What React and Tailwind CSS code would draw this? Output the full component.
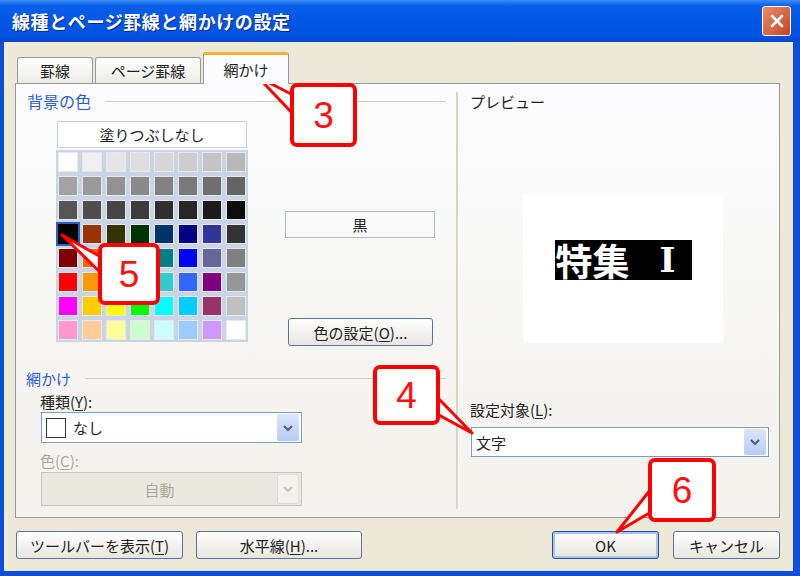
import React from 'react';

const palette = [
  ['#ffffff', '#f0f0f0', '#e5e5e5', '#dedede', '#d6d6d6', '#cdcdcd', '#c4c4c4', '#b9b9b9'],
  ['#a3a3a3', '#9a9a9a', '#929292', '#8a8a8a', '#828282', '#797979', '#6f6f6f', '#636363'],
  ['#555555', '#4d4d4d', '#454545', '#3b3b3b', '#2f2f2f', '#262626', '#1c1c1c', '#0c0c0c'],
  ['#000000', '#993300', '#333300', '#003300', '#003366', '#000080', '#333399', '#333333'],
  ['#800000', '#ff6600', '#808000', '#008000', '#008080', '#0000ff', '#666699', '#808080'],
  ['#ff0000', '#ff9900', '#99cc00', '#339966', '#33cccc', '#3366ff', '#800080', '#969696'],
  ['#ff00ff', '#ffcc00', '#ffff00', '#00ff00', '#00ffff', '#00ccff', '#993366', '#c0c0c0'],
  ['#ff99cc', '#ffcc99', '#ffff99', '#ccffcc', '#ccffff', '#99ccff', '#cc99ff', '#ffffff'],
];

const Chevron = ({ color = '#4d6185' }) => (
  <svg width="12" height="10" viewBox="0 0 12 10">
    <path d="M2 3 L6 7 L10 3" fill="none" stroke={color} strokeWidth="2.2" />
  </svg>
);

const XpButton = ({ children, className = '' }) => (
  <button className={`h-[28px] rounded-[3px] border border-[#5874a0] bg-gradient-to-b from-[#ffffff] to-[#e8e6de] text-[15px] text-[#222] flex items-center justify-center ${className}`}>
    {children}
  </button>
);

const U = ({ children }) => <span className="underline underline-offset-2">{children}</span>;

const Callout = ({ n, className }) => (
  <div className={`absolute bg-white border-[4px] border-[#ff0000] rounded-[7px] flex items-center justify-center text-[#ff1010] text-[37px] font-['Liberation_Sans',sans-serif] ${className}`}>
    {n}
  </div>
);

export default function App() {
  return (
    <div className="w-[800px] h-[576px] relative overflow-hidden bg-[#0b4fd8] flex flex-col font-['Noto_Sans_CJK_JP','Liberation_Sans',sans-serif] text-[15px] text-[#222] leading-none">
      {/* title bar */}
      <div className="h-[42px] shrink-0 flex items-center justify-between pl-[12px] pr-[9px] bg-[linear-gradient(to_bottom,#3d8cf6_0%,#0a5fe9_14%,#0056e6_50%,#0052e2_85%,#0745cc_100%)]">
        <span className="text-white font-bold text-[18px] tracking-[0.6px] [text-shadow:1px_1px_0_#0a2a8a]">線種とページ罫線と網かけの設定</span>
        <div className="w-[29px] h-[30px] rounded-[3px] border border-white bg-gradient-to-br from-[#e88b6a] to-[#c8431f] flex items-center justify-center">
          <svg width="16" height="16" viewBox="0 0 16 16">
            <path d="M3 3 L13 13 M13 3 L3 13" stroke="white" strokeWidth="2.6" strokeLinecap="round" />
          </svg>
        </div>
      </div>

      {/* body */}
      <div className="flex-1 ml-[4px] mr-[7px] mb-[5px] bg-[#ece9d8] flex flex-col pl-[11px]">
        {/* tabs */}
        <div className="h-[41px] shrink-0 flex items-end pl-[2px] gap-[2px]">
          <div className="w-[76px] h-[26px] border border-b-0 border-[#919b9c] rounded-t-[3px] bg-gradient-to-b from-[#ffffff] to-[#ecebe5] flex items-center justify-center">罫線</div>
          <div className="w-[106px] h-[26px] border border-b-0 border-[#919b9c] rounded-t-[3px] bg-gradient-to-b from-[#ffffff] to-[#ecebe5] flex items-center justify-center">ページ罫線</div>
          <div className="relative z-10 -mb-px w-[86px] h-[32px] border border-b-0 border-[#919b9c] border-t-[3px] border-t-[#f0b030] rounded-t-[3px] bg-[#fcfcfe] flex items-center justify-center">網かけ</div>
        </div>

        {/* panel */}
        <div className="w-[765px] h-[435px] shrink-0 border border-[#919b9c] bg-gradient-to-b from-[#fcfcfe] to-[#f3f2ec] flex">
          {/* left column */}
          <div className="w-[440px] flex flex-col">
            <div className="mt-[8px] h-[18px] flex items-center pl-[11px] pr-[10px]">
              <span className="text-[16px] text-[#2a5bd7]">背景の色</span>
              <div className="flex-1 ml-[14px] h-px bg-[#d0d0bf]" />
            </div>
            <div className="flex mt-[11px]">
              <div className="ml-[40px] w-[192px] flex flex-col">
                <div className="ml-[1px] w-[190px] h-[27px] border border-[#c3cfe0] bg-white flex items-center justify-center">塗りつぶしなし</div>
                <div className="mt-[2px] w-[192px] h-[192px] p-[2px] bg-[#cbd4e3] grid grid-cols-8 gap-[4px]">
                  {palette.flat().map((c, i) => (
                    <div
                      key={i}
                      className={i === 24 ? 'w-[20px] h-[20px] ring-2 ring-[#2d5fc0]' : 'w-[20px] h-[20px] border border-[#e4e9f1]'}
                      style={{ backgroundColor: c }}
                    />
                  ))}
                </div>
              </div>
              <div className="ml-[37px] w-[150px] flex flex-col">
                <div className="mt-[90px] h-[27px] border border-[#a9bad2] bg-[#fafafa] flex items-center justify-center">黒</div>
                <XpButton className="mt-[80px] ml-[3px] w-[145px]">色の設定(<U>O</U>)...</XpButton>
              </div>
            </div>

            <div className="mt-[23px] h-[18px] flex items-center pl-[10px] pr-[10px]">
              <span className="text-[#2a5bd7]">網かけ</span>
              <div className="flex-1 ml-[14px] h-px bg-[#d0d0bf]" />
            </div>
            <div className="mt-[7px] pl-[24px] h-[16px]">種類(<U>Y</U>):</div>
            <div className="mt-[2px] ml-[25px] w-[261px] h-[31px] border border-[#7f9db9] bg-white flex items-center pl-[4px] pr-[2px]">
              <div className="w-[20px] h-[20px] border-[1.5px] border-[#333] bg-white" />
              <span className="ml-[7px] flex-1">なし</span>
              <div className="w-[22px] h-[27px] rounded-[2px] bg-gradient-to-b from-[#dce6fb] to-[#b6cbf5] flex items-center justify-center">
                <Chevron />
              </div>
            </div>
            <div className="mt-[10px] pl-[24px] h-[16px] text-[#aca899]">色(<U>C</U>):</div>
            <div className="mt-[3px] ml-[25px] w-[261px] h-[34px] border border-[#c9c7ba] bg-[#ebe9df] flex items-center pr-[2px]">
              <span className="flex-1 text-center text-[#aca899]">自動</span>
              <div className="w-[22px] h-[30px] rounded-[2px] border border-[#e0ded4] bg-[#f3f2ec] flex items-center justify-center">
                <Chevron color="#c9c7ba" />
              </div>
            </div>
          </div>

          {/* divider */}
          <div className="my-[8px] w-[3px] border-l-2 border-[#d6d3c7] border-r border-r-white" />

          {/* right column */}
          <div className="flex-1 flex flex-col">
            <div className="mt-[8px] h-[18px] pl-[11px] flex items-center">プレビュー</div>
            <div className="mt-[83px] ml-[64px] w-[200px] h-[150px] bg-white flex items-center justify-center pb-[16px]">
              <div className="w-[137px] h-[40px] bg-black text-white font-bold text-[37px] flex items-center pl-[1px]">
                <span>特集</span>
                <span className="ml-[30px] font-['DejaVu_Serif',serif] text-[34px]">Ⅰ</span>
              </div>
            </div>
            <div className="mt-[59px] pl-[11px] h-[16px]">設定対象(<U>L</U>):</div>
            <div className="mt-[9px] ml-[12px] w-[298px] h-[30px] border border-[#7f9db9] bg-white flex items-center pl-[4px] pr-[2px]">
              <span className="flex-1">文字</span>
              <div className="w-[22px] h-[26px] rounded-[2px] bg-gradient-to-b from-[#dce6fb] to-[#b6cbf5] flex items-center justify-center">
                <Chevron />
              </div>
            </div>
          </div>
        </div>

        {/* bottom buttons */}
        <div className="mt-[13px] w-[765px] flex">
          <XpButton className="ml-[1px] w-[167px]">ツールバーを表示(<U>T</U>)</XpButton>
          <XpButton className="ml-[13px] w-[166px]">水平線(<U>H</U>)...</XpButton>
          <XpButton className="ml-auto w-[107px] border-[#24508f] shadow-[inset_0_0_0_2px_#a9c4f0]">OK</XpButton>
          <XpButton className="ml-[14px] w-[107px]">キャンセル</XpButton>
        </div>
      </div>

      {/* callout pointers */}
      <svg className="absolute left-0 top-0 pointer-events-none" width="800" height="576">
        <g fill="white" stroke="#ff0000" strokeWidth="3" strokeLinejoin="round">
          <polygon points="258,77 293,95 293,114" />
          <polygon points="62,235 101,257 101,273" />
          <polygon points="472,433 437,397 437,414" />
          <polygon points="617,532 651,489 651,512" />
        </g>
      </svg>
      <Callout n="3" className="left-[290px] top-[83px] w-[67px] h-[64px]" />
      <Callout n="5" className="left-[98px] top-[243px] w-[62px] h-[62px]" />
      <Callout n="4" className="left-[373px] top-[365px] w-[67px] h-[60px]" />
      <Callout n="6" className="left-[648px] top-[458px] w-[68px] h-[64px]" />
    </div>
  );
}
